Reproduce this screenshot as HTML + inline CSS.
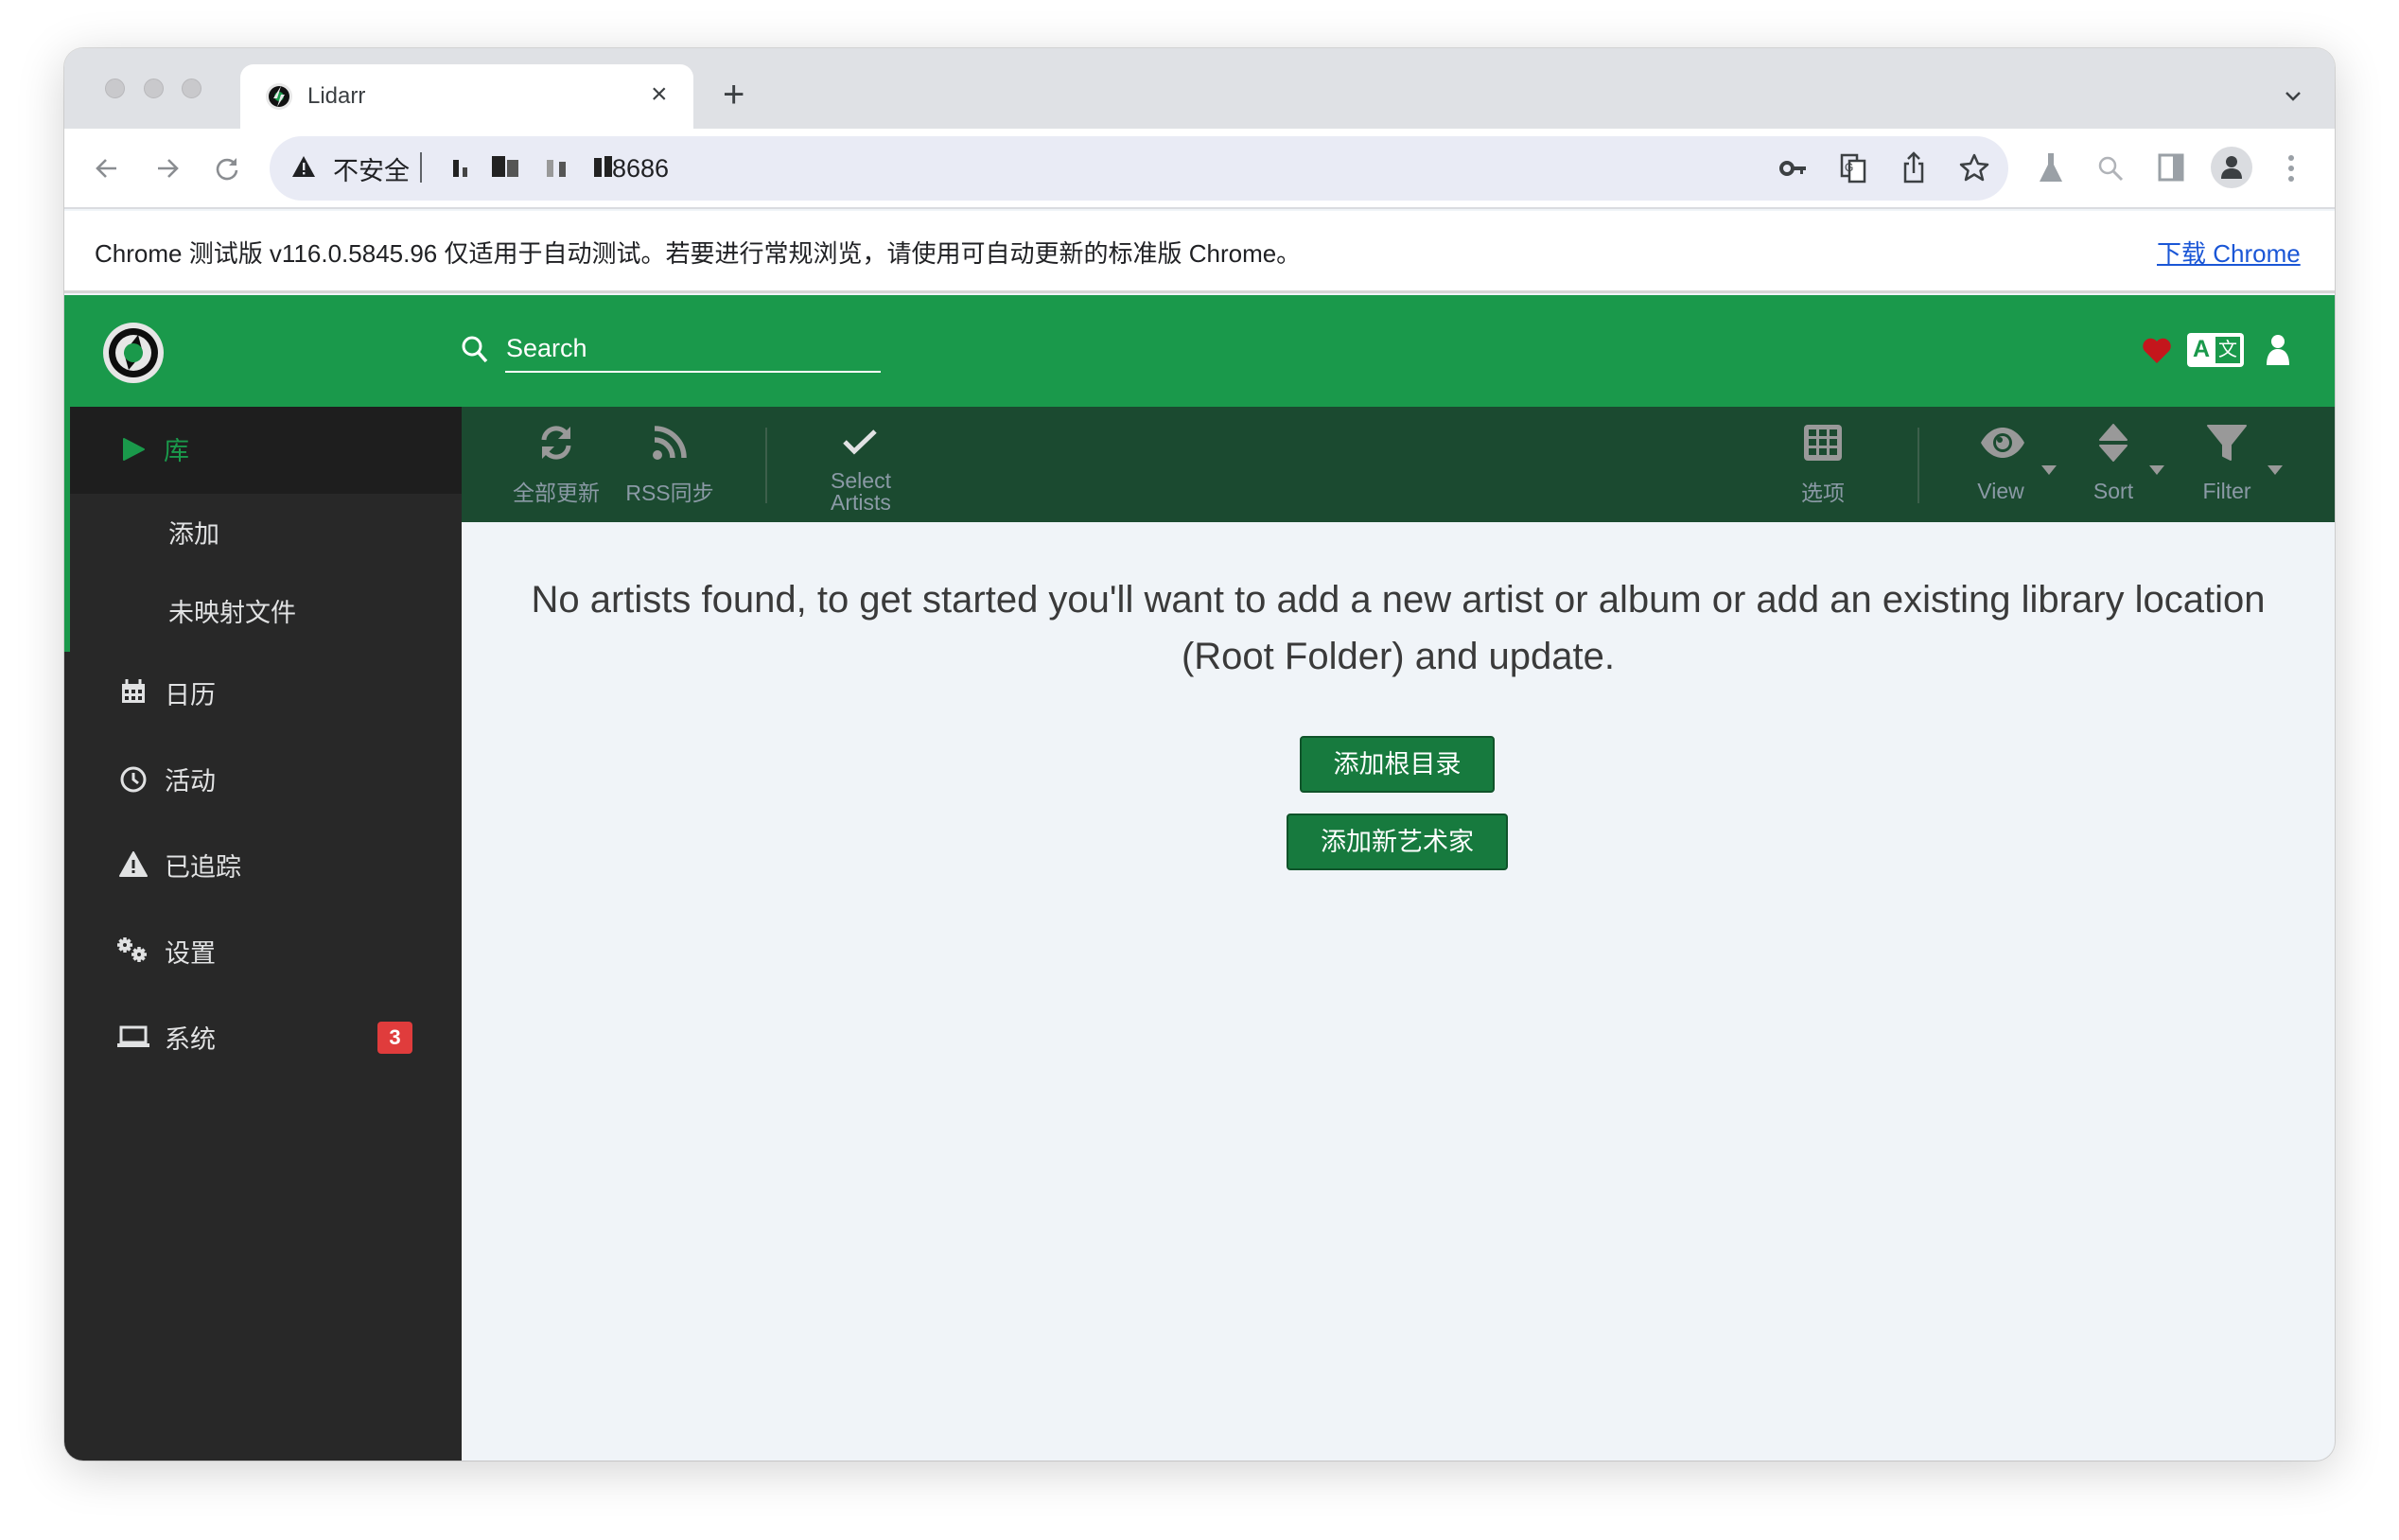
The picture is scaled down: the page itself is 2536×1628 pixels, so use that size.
<!DOCTYPE html>
<html><head><meta charset="utf-8"><style>
*{box-sizing:border-box;margin:0;padding:0}
body{width:2536px;height:1628px;background:#fff;font-family:"Liberation Sans","Noto Sans CJK SC",sans-serif;position:relative;overflow:hidden}
.abs{position:absolute}
.win{left:68px;top:51px;width:2400px;height:1493px;border-radius:20px;overflow:hidden;box-shadow:0 10px 50px rgba(0,0,0,.18),0 0 0 1px rgba(0,0,0,.12);background:#f0f4f8}
.c{text-align:center}
.tb-label{color:#8b9aa6;font-size:23px;text-align:center;width:120px;margin-left:-60px}
.side{color:#e1e2e3;font-size:27px}
</style></head><body>
<div class="abs win">
 <div class="abs" style="left:0;top:0;width:2400px;height:85px;background:#dfe1e5"></div>
 <div class="abs" style="left:43px;top:32px;width:21px;height:21px;border-radius:50%;background:#c9c9cc;border:1px solid #b8b8bb"></div>
 <div class="abs" style="left:84px;top:32px;width:21px;height:21px;border-radius:50%;background:#c9c9cc;border:1px solid #b8b8bb"></div>
 <div class="abs" style="left:124px;top:32px;width:21px;height:21px;border-radius:50%;background:#c9c9cc;border:1px solid #b8b8bb"></div>
 <div class="abs" style="left:186px;top:17px;width:479px;height:70px;background:#fff;border-radius:14px 14px 0 0"></div>
 <svg class="abs" style="left:212px;top:36px" width="30" height="30" viewBox="0 0 30 30"><circle cx="15" cy="15" r="14" fill="#e8e8e8"/><circle cx="15" cy="15" r="11" fill="#111"/><circle cx="15" cy="15" r="5" fill="#1a9a4b"/><path d="M17 4 L9 17 L13 17 Z M13 26 L21 13 L17 13Z" fill="#e8e8e8"/></svg>
 <div class="abs" style="left:257px;top:37px;font-size:24px;color:#3c4043">Lidarr</div>
 <div class="abs" style="left:620px;top:32px;font-size:30px;color:#3c4043">×</div>
 <div class="abs" style="left:696px;top:27px;font-size:40px;color:#3c4043;font-weight:300">+</div>
 <svg class="abs" style="left:2346px;top:44px" width="20" height="14" viewBox="0 0 20 14"><path d="M3 3 L10 10 L17 3" stroke="#3c4043" stroke-width="2.5" fill="none"/></svg>
 <div class="abs" style="left:0;top:85px;width:2400px;height:85px;background:#fff;border-bottom:2px solid #dadce0"></div>
 <svg class="abs" style="left:30px;top:112px" width="30" height="30" viewBox="0 0 30 30"><path d="M25 15H6M14 6L5 15l9 9" stroke="#8a8d91" stroke-width="2.6" fill="none"/></svg>
 <svg class="abs" style="left:94px;top:112px" width="30" height="30" viewBox="0 0 30 30"><path d="M5 15h19M16 6l9 9-9 9" stroke="#8a8d91" stroke-width="2.6" fill="none"/></svg>
 <svg class="abs" style="left:157px;top:112px" width="30" height="30" viewBox="0 0 30 30"><path d="M23 10A10 10 0 1 0 25 17" stroke="#8a8d91" stroke-width="2.6" fill="none"/><path d="M25 4v8h-8z" fill="#8a8d91"/></svg>
 <div class="abs" style="left:217px;top:93px;width:1838px;height:68px;border-radius:34px;background:#e9ebf5"></div>
 <svg class="abs" style="left:240px;top:112px" width="26" height="26" viewBox="0 0 26 26"><path d="M13 2L25 24H1z" fill="#202124"/><rect x="12" y="9" width="2.4" height="8" fill="#e9ebf5"/><rect x="12" y="19" width="2.4" height="2.4" fill="#e9ebf5"/></svg>
 <div class="abs" style="left:284px;top:108px;font-size:27px;color:#202124">不安全</div>
 <div class="abs" style="left:376px;top:110px;width:2px;height:32px;background:#5f6368"></div>
 <div class="abs" style="left:411px;top:112px;font-size:27px;color:#202124">
  <span style="display:inline-block;width:6px;height:18px;background:#222;margin-right:4px"></span><span style="display:inline-block;width:5px;height:10px;background:#444;margin-right:26px"></span><span style="display:inline-block;width:14px;height:22px;background:#222;margin-right:2px"></span><span style="display:inline-block;width:12px;height:18px;background:#555;margin-right:30px"></span><span style="display:inline-block;width:7px;height:18px;background:#999;margin-right:6px"></span><span style="display:inline-block;width:7px;height:16px;background:#555;margin-right:30px"></span><span style="display:inline-block;width:8px;height:20px;background:#222;margin-right:3px"></span><span style="display:inline-block;width:8px;height:22px;background:#222"></span>8686</div>
 <svg class="abs" style="left:1813px;top:114px" width="30" height="26" viewBox="0 0 30 26"><circle cx="8" cy="13" r="6" fill="none" stroke="#3c4043" stroke-width="4"/><path d="M14 11h14v4h-3v4h-3v-4h-8z" fill="#3c4043"/></svg>
 <svg class="abs" style="left:1877px;top:111px" width="28" height="32" viewBox="0 0 28 32"><rect x="2" y="2" width="16" height="22" fill="none" stroke="#3c4043" stroke-width="2.5"/><rect x="10" y="8" width="16" height="22" fill="#fff" stroke="#3c4043" stroke-width="2.5"/><text x="5" y="19" font-size="12" fill="#3c4043" font-family="Liberation Sans">G</text></svg>
 <svg class="abs" style="left:1942px;top:108px" width="26" height="36" viewBox="0 0 26 36"><path d="M8 14H4v19h18V14h-4M13 24V3M7 9l6-6 6 6" stroke="#3c4043" stroke-width="2.5" fill="none"/></svg>
 <svg class="abs" style="left:2003px;top:110px" width="32" height="32" viewBox="0 0 32 32"><path d="M16 3l4 9 10 1-7.5 6.5L25 29l-9-5.5L7 29l2.5-9.5L2 13l10-1z" stroke="#3c4043" stroke-width="2.5" fill="none" stroke-linejoin="round"/></svg>
 <svg class="abs" style="left:2084px;top:108px" width="32" height="36" viewBox="0 0 32 36"><path d="M11 3h10M13 3v12L4 33h24L19 15V3" fill="#9aa0a6"/></svg>
 <svg class="abs" style="left:2148px;top:112px" width="30" height="30" viewBox="0 0 30 30"><circle cx="12" cy="12" r="8" stroke="#b0b3b8" stroke-width="2.5" fill="none"/><path d="M18 18l9 9" stroke="#b0b3b8" stroke-width="3"/></svg>
 <svg class="abs" style="left:2212px;top:110px" width="30" height="32" viewBox="0 0 30 32"><rect x="3" y="3" width="24" height="26" fill="none" stroke="#9aa0a6" stroke-width="3"/><rect x="17" y="3" width="10" height="26" fill="#9aa0a6"/></svg>
 <div class="abs" style="left:2269px;top:104px;width:44px;height:44px;border-radius:50%;background:#dadce0"></div>
 <svg class="abs" style="left:2276px;top:110px" width="30" height="32" viewBox="0 0 30 32"><circle cx="15" cy="10" r="6" fill="#3c4043"/><path d="M4 28c0-8 5-11 11-11s11 3 11 11z" fill="#3c4043"/></svg>
 <svg class="abs" style="left:2344px;top:110px" width="20" height="36" viewBox="0 0 20 36"><circle cx="10" cy="6" r="3" fill="#9aa0a6"/><circle cx="10" cy="17" r="3" fill="#9aa0a6"/><circle cx="10" cy="28" r="3" fill="#9aa0a6"/></svg>
 <div class="abs" style="left:0;top:172px;width:2400px;height:87px;background:#fff;border-bottom:3px solid #d6d6d6"></div>
 <div class="abs" style="left:32px;top:197px;font-size:26px;color:#202124">Chrome 测试版 v116.0.5845.96 仅适用于自动测试。若要进行常规浏览，请使用可自动更新的标准版 Chrome。</div>
 <div class="abs" style="left:2212px;top:197px;font-size:26px;color:#1a56d6;text-decoration:underline">下载 Chrome</div>
 <div class="abs" style="left:0;top:261px;width:2400px;height:118px;background:#1a994b"></div>
 <svg class="abs" style="left:40px;top:289px" width="66" height="66" viewBox="0 0 66 66"><circle cx="33" cy="33" r="32" fill="#e6e6e6"/><circle cx="33" cy="33" r="26" fill="#0d0d0d"/><path d="M33 14a19 19 0 0 1 0 38a19 19 0 0 1 0-38z" fill="#e6e6e6"/><path d="M38 14 L43 33 L28 51 L23 33Z" fill="#0d0d0d"/><circle cx="33" cy="33" r="10" fill="#1a994b"/></svg>
 <svg class="abs" style="left:419px;top:303px" width="30" height="32" viewBox="0 0 30 32"><circle cx="12" cy="12" r="9" stroke="#fff" stroke-width="3" fill="none"/><path d="M19 19l8 9" stroke="#fff" stroke-width="3.5"/></svg>
 <div class="abs" style="left:467px;top:302px;font-size:27px;color:#fff">Search</div>
 <div class="abs" style="left:466px;top:341px;width:397px;height:2px;background:#fff"></div>
 <svg class="abs" style="left:2196px;top:305px" width="32" height="30" viewBox="0 0 32 30"><path d="M16 28L3 15A7.5 7.5 0 0 1 16 5A7.5 7.5 0 0 1 29 15z" fill="#c4161c"/></svg>
 <div class="abs" style="left:2244px;top:301px;width:60px;height:36px;background:#fff;border-radius:4px"></div>
 <div class="abs" style="left:2250px;top:304px;font-size:25px;color:#1a994b;font-weight:bold">A</div>
 <div class="abs" style="left:2274px;top:305px;width:26px;height:28px;background:#1a994b;color:#fff;font-size:20px;text-align:center;line-height:28px">文</div>
 <svg class="abs" style="left:2326px;top:302px" width="28" height="34" viewBox="0 0 28 34"><circle cx="14" cy="8" r="7" fill="#fff"/><path d="M2 33c0-12 5-17 12-17s12 5 12 17z" fill="#fff"/></svg>
 <div class="abs" style="left:0;top:379px;width:420px;height:1114px;background:#282828"></div>
 <div class="abs" style="left:0;top:379px;width:420px;height:92px;background:#1e1e1e"></div>
 <div class="abs" style="left:0;top:379px;width:6px;height:259px;background:#1a994b"></div>
 <svg class="abs" style="left:60px;top:411px" width="26" height="26" viewBox="0 0 26 26"><path d="M3 2L24 13L3 24z" fill="#1a994b" stroke="#1a994b" stroke-linejoin="round" stroke-width="2"/></svg>
 <div class="abs side" style="left:105px;top:404px;color:#1a994b">库</div>
 <div class="abs side" style="left:110px;top:492px">添加</div>
 <div class="abs side" style="left:110px;top:575px">未映射文件</div>
 <svg class="abs" style="left:60px;top:667px" width="26" height="26" viewBox="0 0 26 26"><path d="M1 5h24v20H1z" fill="#e1e2e3"/><path d="M6 0v6M20 0v6" stroke="#e1e2e3" stroke-width="3"/><g fill="#282828"><rect x="4" y="11" width="4" height="4"/><rect x="11" y="11" width="4" height="4"/><rect x="18" y="11" width="4" height="4"/><rect x="4" y="18" width="4" height="4"/><rect x="11" y="18" width="4" height="4"/><rect x="18" y="18" width="4" height="4"/></g></svg>
 <div class="abs side" style="left:106px;top:662px">日历</div>
 <svg class="abs" style="left:58px;top:758px" width="30" height="30" viewBox="0 0 30 30"><circle cx="15" cy="15" r="12" stroke="#e1e2e3" stroke-width="3" fill="none"/><path d="M15 8v7l5 4" stroke="#e1e2e3" stroke-width="3" fill="none"/></svg>
 <div class="abs side" style="left:106px;top:753px">活动</div>
 <svg class="abs" style="left:58px;top:849px" width="30" height="28" viewBox="0 0 30 28"><path d="M15 1L29 26H1z" fill="#e1e2e3" stroke="#e1e2e3" stroke-linejoin="round" stroke-width="2"/><rect x="13.5" y="9" width="3" height="9" fill="#282828"/><rect x="13.5" y="20" width="3" height="3" fill="#282828"/></svg>
 <div class="abs side" style="left:106px;top:844px">已追踪</div>
 <svg class="abs" style="left:55px;top:939px" width="36" height="30" viewBox="0 0 36 30"><g fill="#e1e2e3"><circle cx="9" cy="9" r="6"/><circle cx="24" cy="19" r="6"/><g stroke="#e1e2e3" stroke-width="3.5"><path d="M9 1v16M1 9h16M3.5 3.5l11 11M14.5 3.5l-11 11"/><path d="M24 11v16M16 19h16M18.5 13.5l11 11M29.5 13.5l-11 11"/></g></g><circle cx="9" cy="9" r="2" fill="#282828"/><circle cx="24" cy="19" r="2" fill="#282828"/></svg>
 <div class="abs side" style="left:106px;top:935px">设置</div>
 <svg class="abs" style="left:55px;top:1032px" width="36" height="26" viewBox="0 0 36 26"><path d="M5 3h26v16H5z" stroke="#e1e2e3" stroke-width="3" fill="none"/><path d="M1 20h34v4H1z" fill="#e1e2e3"/></svg>
 <div class="abs side" style="left:106px;top:1026px">系统</div>
 <div class="abs" style="left:331px;top:1029px;width:37px;height:34px;background:#e03c3c;border-radius:4px;color:#fff;font-size:22px;font-weight:bold;text-align:center;line-height:34px">3</div>
 <div class="abs" style="left:420px;top:379px;width:1980px;height:122px;background:#1b4a30"></div>
 <svg class="abs" style="left:500px;top:396px" width="40" height="42" viewBox="0 0 40 42"><path d="M7 18A13 13 0 0 1 31 12" stroke="#999" stroke-width="5" fill="none"/><path d="M35 4v13H22z" fill="#999"/><path d="M33 24A13 13 0 0 1 9 30" stroke="#999" stroke-width="5" fill="none"/><path d="M5 38V25h13z" fill="#999"/></svg>
 <div class="abs tb-label" style="left:520px;top:451px">全部更新</div>
 <svg class="abs" style="left:620px;top:397px" width="40" height="40" viewBox="0 0 40 40"><circle cx="7" cy="33" r="5" fill="#999"/><path d="M4 17a19 19 0 0 1 19 19M4 5a31 31 0 0 1 31 31" stroke="#999" stroke-width="5.5" fill="none"/></svg>
 <div class="abs tb-label" style="left:640px;top:451px">RSS同步</div>
 <div class="abs" style="left:741px;top:401px;width:2px;height:80px;background:#3d5f4b"></div>
 <svg class="abs" style="left:821px;top:402px" width="40" height="30" viewBox="0 0 40 30"><path d="M4 14l10 10L36 3" stroke="#e1e2e3" stroke-width="5" fill="none"/></svg>
 <div class="abs tb-label" style="left:842px;top:446px;line-height:23px">Select<br>Artists</div>
 <svg class="abs" style="left:1839px;top:398px" width="40" height="38" viewBox="0 0 40 38"><rect x="0" y="0" width="40" height="38" rx="4" fill="#999"/><g fill="#1b4a30"><rect x="5" y="5" width="8" height="7"/><rect x="16" y="5" width="8" height="7"/><rect x="27" y="5" width="8" height="7"/><rect x="5" y="15" width="8" height="7"/><rect x="16" y="15" width="8" height="7"/><rect x="27" y="15" width="8" height="7"/><rect x="5" y="25" width="8" height="7"/><rect x="16" y="25" width="8" height="7"/><rect x="27" y="25" width="8" height="7"/></g></svg>
 <div class="abs tb-label" style="left:1859px;top:451px">选项</div>
 <div class="abs" style="left:1959px;top:401px;width:2px;height:80px;background:#3d5f4b"></div>
 <svg class="abs" style="left:2025px;top:400px" width="48" height="34" viewBox="0 0 48 34"><path d="M1 17C8 4 18 1 24 1s16 3 23 16C40 30 30 33 24 33S8 30 1 17z" fill="#999"/><circle cx="24" cy="17" r="10" fill="#1b4a30"/><circle cx="24" cy="17" r="7" fill="#999"/><circle cx="21" cy="14" r="3" fill="#1b4a30"/></svg>
 <svg class="abs" style="left:2089px;top:440px" width="18" height="12" viewBox="0 0 18 12"><path d="M1 1h16L9 11z" fill="#999"/></svg>
 <div class="abs tb-label" style="left:2047px;top:455px">View</div>
 <svg class="abs" style="left:2151px;top:397px" width="30" height="40" viewBox="0 0 30 40"><path d="M15 1L29 17H1z M15 39L29 23H1z" fill="#999" stroke="#999" stroke-linejoin="round" stroke-width="2"/></svg>
 <svg class="abs" style="left:2203px;top:440px" width="18" height="12" viewBox="0 0 18 12"><path d="M1 1h16L9 11z" fill="#999"/></svg>
 <div class="abs tb-label" style="left:2166px;top:455px">Sort</div>
 <svg class="abs" style="left:2265px;top:397px" width="42" height="40" viewBox="0 0 42 40"><path d="M1 2h40L25 22v16l-8-4V22z" fill="#999" stroke="#999" stroke-linejoin="round" stroke-width="2"/></svg>
 <svg class="abs" style="left:2328px;top:440px" width="18" height="12" viewBox="0 0 18 12"><path d="M1 1h16L9 11z" fill="#999"/></svg>
 <div class="abs tb-label" style="left:2286px;top:455px">Filter</div>
 <div class="abs c" style="left:420px;top:553px;width:1980px;font-size:40px;color:#3a3a3a;line-height:60px">No artists found, to get started you'll want to add a new artist or album or add an existing library location<br>(Root Folder) and update.</div>
 <div class="abs" style="left:1306px;top:727px;width:206px;height:60px;background:#177a3e;border:2px solid #10532a;border-radius:4px;color:#fff;font-size:27px;text-align:center;line-height:56px">添加根目录</div>
 <div class="abs" style="left:1292px;top:809px;width:234px;height:60px;background:#177a3e;border:2px solid #10532a;border-radius:4px;color:#fff;font-size:27px;text-align:center;line-height:56px">添加新艺术家</div>
</div>
</body></html>
